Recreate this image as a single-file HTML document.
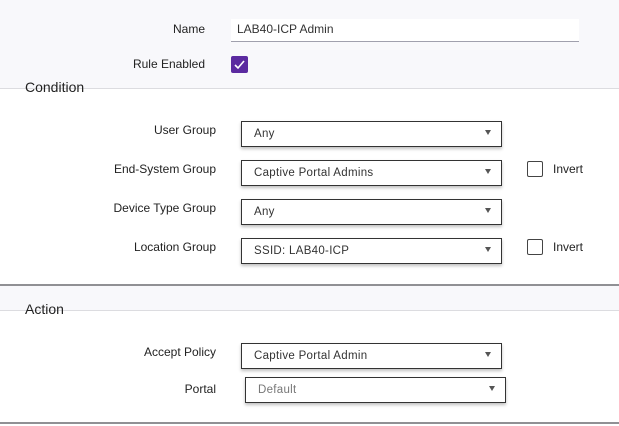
<!DOCTYPE html>
<html><head><style>
body{margin:0;width:619px;height:426px;position:relative;background:#fff;font-family:"Liberation Sans",sans-serif;overflow:hidden;color:#222}
.a{position:absolute}
.lbl{position:absolute;font-size:12px;text-align:right;color:#222}
.sel{position:absolute;width:259px;height:24px;border:1px solid #333;background:#fff;box-shadow:0 2px 3px rgba(0,0,0,.25);font-size:11.5px;color:#333;box-sizing:content-box}
.sel span{position:absolute;left:12px;top:6px;letter-spacing:.3px}
.sel i{position:absolute;right:10px;top:8px;width:0;height:0;border-left:3px solid transparent;border-right:3px solid transparent;border-top:5px solid #555}
.cb{position:absolute;width:14px;height:14px;border:1px solid #444;border-radius:2px;background:#fff}
.inv{position:absolute;font-size:12px}
.sec{position:absolute;font-size:14px;padding:0 6px;color:#222}
</style></head><body>
<div class="a" style="left:0;top:0;width:619px;height:88px;background:#f8f8fb"></div>
<div class="a" style="left:0;top:88px;width:619px;height:1px;background:#dcdce0"></div>
<div class="lbl" style="right:414px;top:22px">Name</div>
<div class="a" style="left:231px;top:19px;width:348px;height:22px;background:#fff;border-bottom:1px solid #a0a0ad"></div>
<div class="a" style="left:237px;top:22px;font-size:12px;color:#333">LAB40-ICP Admin</div>
<div class="lbl" style="right:414px;top:57px">Rule Enabled</div>
<div class="a" style="left:231px;top:56px;width:17px;height:17px;background:#5b2aa0;border-radius:2px"><svg width="17" height="17"><path d="M4 9l3 3 6-7" stroke="#fff" stroke-width="1.6" fill="none"/></svg></div>
<div class="sec" style="left:19px;top:79px">Condition</div>
<div class="lbl" style="right:403px;top:123px">User Group</div>
<div class="sel" style="left:241px;top:121px"><span>Any</span><i></i></div>
<div class="lbl" style="right:403px;top:162px">End-System Group</div>
<div class="sel" style="left:241px;top:160px"><span>Captive Portal Admins</span><i></i></div>
<div class="cb" style="left:527px;top:161px"></div><div class="inv" style="left:553px;top:162px">Invert</div>
<div class="lbl" style="right:403px;top:201px">Device Type Group</div>
<div class="sel" style="left:241px;top:199px"><span>Any</span><i></i></div>
<div class="lbl" style="right:403px;top:240px">Location Group</div>
<div class="sel" style="left:241px;top:238px"><span>SSID: LAB40-ICP</span><i></i></div>
<div class="cb" style="left:527px;top:239px"></div><div class="inv" style="left:553px;top:240px">Invert</div>
<div class="a" style="left:0;top:284px;width:619px;height:2px;background:#909094"></div>
<div class="a" style="left:0;top:286px;width:619px;height:24px;background:#f8f8fb"></div>
<div class="a" style="left:0;top:310px;width:619px;height:1px;background:#dcdce0"></div>
<div class="sec" style="left:19px;top:301px">Action</div>
<div class="lbl" style="right:403px;top:345px">Accept Policy</div>
<div class="sel" style="left:241px;top:343px"><span>Captive Portal Admin</span><i></i></div>
<div class="lbl" style="right:403px;top:382px">Portal</div>
<div class="sel" style="left:245px;top:377px"><span style="color:#777">Default</span><i></i></div>
<div class="a" style="left:0;top:422px;width:619px;height:2px;background:#909094"></div>
</body></html>
